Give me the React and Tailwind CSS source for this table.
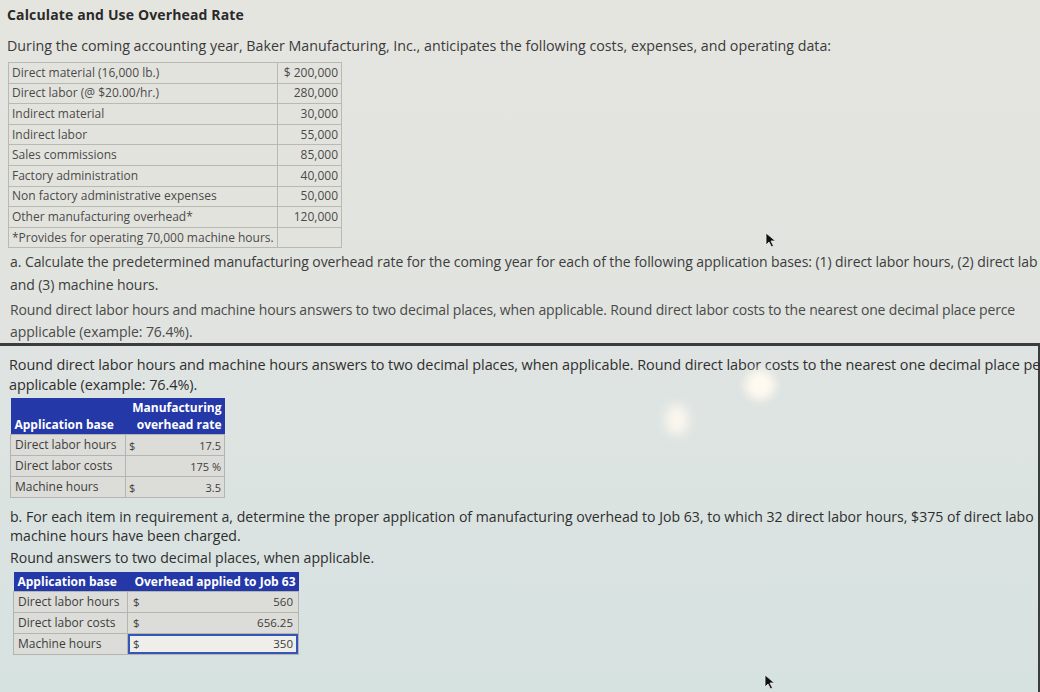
import React from "react";

const costs = [
  ["Direct material (16,000 lb.)", "$ 200,000"],
  ["Direct labor (@ $20.00/hr.)", "280,000"],
  ["Indirect material", "30,000"],
  ["Indirect labor", "55,000"],
  ["Sales commissions", "85,000"],
  ["Factory administration", "40,000"],
  ["Non factory administrative expenses", "50,000"],
  ["Other manufacturing overhead*", "120,000"],
];

const rates = [
  ["Direct labor hours", "$", "17.5"],
  ["Direct labor costs", "", "175 %"],
  ["Machine hours", "$", "3.5"],
];

const applied = [
  ["Direct labor hours", "$", "560"],
  ["Direct labor costs", "$", "656.25"],
  ["Machine hours", "$", "350"],
];

function Cursor({ className }) {
  return (
    <svg className={className} width="12" height="16" viewBox="0 0 12 16">
      <path d="M1 1 L1 13 L4 10 L6.5 15 L8.5 14 L6 9 L10.5 9 Z" fill="#111" stroke="#eee" strokeWidth="0.8" />
    </svg>
  );
}

export default function App() {
  return (
    <div
      className="relative w-[1040px] h-[692px] overflow-hidden bg-linear-to-b from-[#e5e5e0] via-[#e0e3df] to-[#d7e1df] text-[#3a3a3a]"
      style={{ fontFamily: '"Open Sans", "Noto Sans", sans-serif' }}
    >
      {/* top section */}
      <div className="pl-[7px] pt-[6px]">
        <p className="text-[14px] font-bold text-[#2a2a2a] leading-[18px] tracking-[0.01em]">Calculate and Use Overhead Rate</p>
        <p className="mt-[13px] text-[14.25px] leading-[18px] whitespace-nowrap">
          During the coming accounting year, Baker Manufacturing, Inc., anticipates the following costs, expenses, and operating data:
        </p>

        <table className="mt-[7px] ml-px border-collapse text-[12px] text-[#4a4a4a] bg-[#e3e3de]">
          <tbody>
            {costs.map(([label, val]) => (
              <tr key={label} className="h-[20.6px]">
                <td className="w-[269px] border border-[#b9b9b4] px-[3px] leading-none">{label}</td>
                <td className="w-[64px] border border-[#b9b9b4] px-[3px] text-right leading-none">{val}</td>
              </tr>
            ))}
            <tr className="h-[20.6px]">
              <td className="border border-[#b9b9b4] px-[3px] leading-none">*Provides for operating 70,000 machine hours.</td>
              <td className="border border-[#b9b9b4]"></td>
            </tr>
          </tbody>
        </table>
      </div>

      {/* part a */}
      <div className="pl-[10px] pt-[2px] text-[14px] text-[#3c3c3c] whitespace-nowrap tracking-[-0.005em]">
        <p className="leading-[23px]">
          a. Calculate the predetermined manufacturing overhead rate for the coming year for each of the following application bases: (1) direct labor hours, (2) direct lab
        </p>
        <p className="leading-[23px]">and (3) machine hours.</p>
        <p className="mt-[3px] leading-[22px] text-[#4a4a4a] tracking-[-0.012em]">
          Round direct labor hours and machine hours answers to two decimal places, when applicable. Round direct labor costs to the nearest one decimal place perce
        </p>
        <p className="leading-[22px] text-[#4a4a4a]">applicable (example: 76.4%).</p>
      </div>

      {/* lower panel */}
      <div className="border-t-[3px] border-r-2 border-[#3a3d3e] bg-linear-to-b from-[#dfe4e2] to-[#d6e2e0] pb-10">
        <div className="pl-[9px] pt-[9px] text-[14.45px] text-[#2e2e2e] whitespace-nowrap tracking-[-0.005em]">
          <p className="leading-[20px]">
            Round direct labor hours and machine hours answers to two decimal places, when applicable. Round direct labor costs to the nearest one decimal place pe
          </p>
          <p className="leading-[20px]">applicable (example: 76.4%).</p>
        </div>

        <table className="mt-[3px] ml-[10px] border-collapse text-[12px] text-[#3c3c3c]">
          <thead>
            <tr className="bg-[#2438a8] text-white font-bold leading-[17px]">
              <th className="w-[115px] px-[4px] pt-[1px] pb-[1px] text-left align-bottom">Application base</th>
              <th className="w-[99px] px-[3px] pt-[1px] pb-[1px] text-right">
                Manufacturing
                <br />
                overhead rate
              </th>
            </tr>
          </thead>
          <tbody>
            {rates.map(([label, cur, val]) => (
              <tr key={label} className="h-[21px] bg-[#dcdcd8]">
                <td className="border border-[#b4b4b0] px-[4px] leading-none">{label}</td>
                <td className="border border-[#b4b4b0] px-[3px] leading-none">
                  <div className="flex justify-between text-[11px]">
                    <span>{cur}</span>
                    <span>{val}</span>
                  </div>
                </td>
              </tr>
            ))}
          </tbody>
        </table>

        <div className="pl-[10px] pt-[9px] text-[14.1px] text-[#2e2e2e] whitespace-nowrap">
          <p className="leading-[19px]">
            b. For each item in requirement a, determine the proper application of manufacturing overhead to Job 63, to which 32 direct labor hours, $375 of direct labo
          </p>
          <p className="leading-[19px]">machine hours have been charged.</p>
          <p className="mt-[3px] leading-[19px]">Round answers to two decimal places, when applicable.</p>
        </div>

        <table className="mt-[5px] ml-[13px] border-collapse text-[12px] text-[#3c3c3c]">
          <thead>
            <tr className="bg-[#2438a8] text-white font-bold h-[19px] leading-none">
              <th className="w-[114px] px-[4px] text-left">Application base</th>
              <th className="w-[171px] px-[3px] text-right">Overhead applied to Job 63</th>
            </tr>
          </thead>
          <tbody>
            {applied.map(([label, cur, val], i) => (
              <tr key={label} className="h-[21px] bg-[#dcdcd8]">
                <td className="border border-[#b4b4b0] px-[4px] leading-none">{label}</td>
                <td className="border border-[#b4b4b0] p-0 leading-none">
                  <div
                    className={
                      i === 2
                        ? "flex h-[20px] items-center justify-between border-2 border-[#3555b8] bg-[#eeeeea] px-[3px] text-[11.5px]"
                        : "flex items-center justify-between px-[5px] text-[11.5px]"
                    }
                  >
                    <span>{cur}</span>
                    <span>{val}</span>
                  </div>
                </td>
              </tr>
            ))}
          </tbody>
        </table>
      </div>

      {/* glare from the photo */}
      <div className="absolute left-[745px] top-[370px] h-[30px] w-[30px] rounded-full bg-[#fffaf0] blur-[5px]" />
      <div className="absolute left-[666px] top-[405px] h-[30px] w-[22px] rounded-full bg-[#fffaf0] opacity-90 blur-[6px]" />

      <Cursor className="absolute left-[765px] top-[232px]" />
      <Cursor className="absolute left-[764px] top-[674px]" />
    </div>
  );
}
